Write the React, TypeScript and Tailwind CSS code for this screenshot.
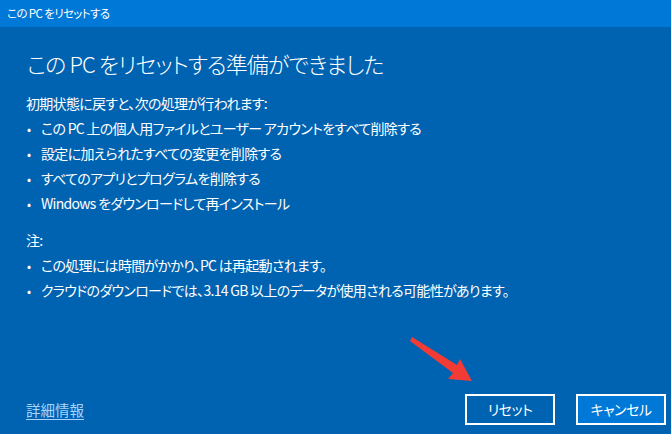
import React from "react";

const font = {
  fontFamily: "'Noto Sans CJK JP', 'Noto Sans', sans-serif",
};

function Bullet({ children }: { children: React.ReactNode }) {
  return (
    <li className="flex h-[25px] items-center">
      <span className="w-[15px] pl-[1px] text-[12px] tracking-normal">•</span>
      <span>{children}</span>
    </li>
  );
}

export default function App() {
  return (
    <div
      className="relative flex h-[434px] w-[671px] flex-col overflow-hidden bg-[#0063b1] text-white [font-feature-settings:'palt']"
      style={font}
    >
      <div className="flex h-[27px] items-center bg-[#0078d7] px-[7px] text-[11.5px] tracking-[-0.6px]">
        この PC をリセットする
      </div>

      <div className="flex flex-col pl-[26px]">
        <h1 className="mt-[20px] ml-[1px] h-[32px] text-[22px] leading-[32px] font-light tracking-[-0.9px]">
          この PC をリセットする準備ができました
        </h1>

        <div className="mt-[12px] text-[14px] tracking-[-0.7px]">
          <p className="flex h-[25px] items-center">初期状態に戻すと、次の処理が行われます:</p>
          <ul>
            <Bullet>この PC 上の個人用ファイルとユーザー アカウントをすべて削除する</Bullet>
            <Bullet>設定に加えられたすべての変更を削除する</Bullet>
            <Bullet>すべてのアプリとプログラムを削除する</Bullet>
            <Bullet>Windows をダウンロードして再インストール</Bullet>
          </ul>

          <p className="mt-[12px] flex h-[25px] items-center">注:</p>
          <ul>
            <Bullet>この処理には時間がかかり、PC は再起動されます。</Bullet>
            <Bullet>クラウドのダウンロードでは、3.14 GB 以上のデータが使用される可能性があります。</Bullet>
          </ul>
        </div>
      </div>

      <div className="mt-auto mb-[9px] flex items-center pr-[5px] pl-[26px]">
        <a className="text-[14.5px] text-[#a6d4ff] underline underline-offset-[3px]">詳細情報</a>
        <div className="ml-auto flex gap-[21px]">
          <button className="h-[31px] w-[90px] border-2 border-white text-[14px] tracking-[-0.5px]">リセット</button>
          <button className="h-[31px] w-[90px] border-2 border-white bg-[#0078d7] text-[14px] tracking-[-0.5px]">
            キャンセル
          </button>
        </div>
      </div>

      {/* red pointer arrow toward the reset button */}
      <svg className="absolute left-[405px] top-[333px]" width="75" height="55" viewBox="0 0 75 55">
        <polygon points="7,4 52,32 55,26 67,48 43,46 48,40 5,8" fill="#f23b35" />
      </svg>
    </div>
  );
}
